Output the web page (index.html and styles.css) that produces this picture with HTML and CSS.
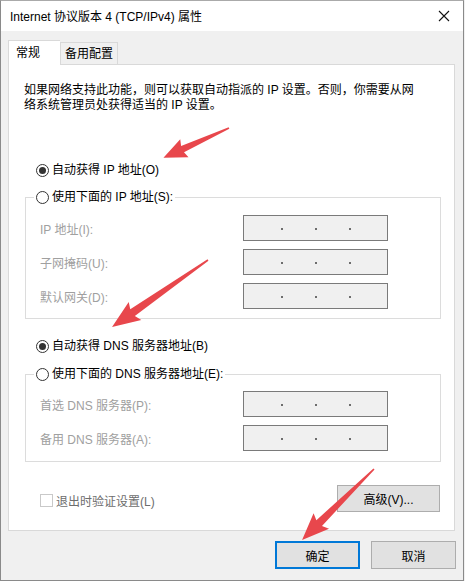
FILE: index.html
```html
<!DOCTYPE html>
<html lang="zh-CN">
<head>
<meta charset="utf-8">
<link rel="stylesheet" href="styles.css">
</head>
<body>
<div class="window">
  <div class="titlebar">
    <span class="title">Internet 协议版本 4 (TCP/IPv4) 属性</span>
    <svg class="close" width="12" height="12" viewBox="0 0 12 12"><path d="M1 1L11 11M11 1L1 11" stroke="#111" stroke-width="1.1" fill="none"/></svg>
  </div>
  <div class="content">
    <div class="tabs">
      <div class="tab active">常规</div>
      <div class="tab">备用配置</div>
    </div>
    <div class="panel">
      <p class="desc">如果网络支持此功能，则可以获取自动指派的 IP 设置。否则，你需要从网<br>络系统管理员处获得适当的 IP 设置。</p>
      <div class="radio-row first"><span class="radio checked"></span><span>自动获得 IP 地址(O)</span></div>
      <fieldset class="group g1">
        <legend><span class="radio-row"><span class="radio"></span><span>使用下面的 IP 地址(S):</span></span></legend>
        <div class="field"><span class="lbl">IP 地址(I):</span><span class="ip"><i></i><i></i><i></i></span></div>
        <div class="field"><span class="lbl">子网掩码(U):</span><span class="ip"><i></i><i></i><i></i></span></div>
        <div class="field"><span class="lbl">默认网关(D):</span><span class="ip"><i></i><i></i><i></i></span></div>
      </fieldset>
      <div class="radio-row dns"><span class="radio checked"></span><span>自动获得 DNS 服务器地址(B)</span></div>
      <fieldset class="group g2">
        <legend><span class="radio-row"><span class="radio"></span><span>使用下面的 DNS 服务器地址(E):</span></span></legend>
        <div class="field"><span class="lbl">首选 DNS 服务器(P):</span><span class="ip"><i></i><i></i><i></i></span></div>
        <div class="field"><span class="lbl">备用 DNS 服务器(A):</span><span class="ip"><i></i><i></i><i></i></span></div>
      </fieldset>
      <div class="bottom-row">
        <div class="check"><span class="box"></span><span>退出时验证设置(L)</span></div>
        <div class="btn adv">高级(V)...</div>
      </div>
    </div>
    <div class="actions">
      <div class="btn ok">确定</div>
      <div class="btn">取消</div>
    </div>
  </div>
  <svg class="arrows" width="465" height="581" viewBox="0 0 465 581">
    <g fill="#e8474c">
      <polygon transform="translate(229 128) rotate(155.6)" points="0,-0.8 51,-3.5 49,-10 72,0 49,10 51,3.5 0,0.8"/>
      <polygon transform="translate(208 260) rotate(145.1)" points="0,-0.8 92,-4 89,-11 117,0 89,11 92,4 0,0.8"/>
      <polygon transform="translate(374 469) rotate(135.4)" points="0,-0.8 77,-4 74,-11 101,0 74,11 77,4 0,0.8"/>
    </g>
  </svg>
</div>
</body>
</html>
```

FILE: styles.css
```css
* { box-sizing: border-box; }
html, body { margin: 0; padding: 0; }
body {
  width: 465px;
  height: 581px;
  overflow: hidden;
  background: #f0f0f0;
  font-family: "Liberation Sans", "Noto Sans CJK SC", sans-serif;
  font-size: 12px;
  color: #000;
}
.window {
  position: relative;
  width: 464px;
  height: 581px;
  border: 1px solid #8a8a8a;
  border-top-color: #aaaaaa;
  background: #f0f0f0;
}
.titlebar {
  height: 30px;
  background: #fff;
  display: flex;
  align-items: center;
  justify-content: space-between;
  padding: 0 10px 1px 9px;
}
.title { font-size: 12px; }
.close { margin-right: 3px; }
.content { padding: 9px 8px 0 7px; }
.tabs {
  display: flex;
  align-items: flex-end;
  height: 24px;
  position: relative;
  z-index: 1;
}
.tab {
  height: 22px;
  padding: 0 4px 0 4px;
  border: 1px solid #d9d9d9;
  border-bottom: none;
  background: #f0f0f0;
  display: flex;
  align-items: center;
  line-height: 1;
}
.tab.active {
  height: 25px;
  margin-bottom: -1px;
  width: 52px;
  padding-left: 7px;
  padding-bottom: 1px;
  background: #fff;
  border-right: none;
}
.tab:not(.active) { border-left: 1px solid #d9d9d9; }
.panel {
  background: #fff;
  border: 1px solid #d9d9d9;
  height: 467px;
  padding: 18px 0 0 0;
}
.desc {
  margin: 0 0 0 15px;
  line-height: 15px;
}
.radio-row {
  display: flex;
  align-items: center;
  height: 16px;
  gap: 3px;
  line-height: 16px;
}
.radio-row.first { margin: 49px 0 0 27px; }
.radio-row.dns { margin: 19px 0 0 27px; }
.radio {
  width: 13px;
  height: 13px;
  border: 1px solid #333;
  border-radius: 50%;
  background: #fff;
  display: flex;
  align-items: center;
  justify-content: center;
  flex: none;
}
.radio.checked::after {
  content: "";
  width: 7px;
  height: 7px;
  border-radius: 50%;
  background: #333;
}
.group {
  margin: 11px 13px 0 16px;
  border: 1px solid #dcdcdc;
  padding: 0;
  min-width: 0;
}
.group legend {
  margin-left: 8px;
  padding: 0 2px;
  height: 16px;
}
.g1 { padding: 10px 0 9px 0; }
.g2 { padding: 9px 0 10px 0; margin-top: 12px; }
.field {
  display: flex;
  align-items: center;
  height: 26px;
  padding-left: 14px;
}
.field + .field { margin-top: 8px; }
.lbl { width: 203px; color: #a0a0a0; flex: none; }
.ip {
  width: 145px;
  height: 26px;
  border: 1px solid #7a7a7a;
  background: #f0f0f0;
  display: flex;
  align-items: center;
  padding: 1px 0 0 37px;
  gap: 32px;
}
.ip i {
  width: 2px;
  height: 2px;
  background: #6d6d6d;
  flex: none;
}
.bottom-row {
  display: flex;
  justify-content: space-between;
  align-items: center;
  margin: 23px 14px 0 31px;
}
.check {
  display: flex;
  align-items: center;
  gap: 3px;
  color: #6d6d6d;
  margin-top: 3px;
}
.box {
  width: 13px;
  height: 13px;
  border: 1px solid #c9c9c9;
  background: #fff;
}
.btn {
  height: 28px;
  border: 1px solid #adadad;
  background: #e1e1e1;
  display: flex;
  align-items: center;
  justify-content: center;
  width: 85px;
}
.btn.adv { width: 103px; height: 27px; }
.actions {
  display: flex;
  justify-content: flex-end;
  gap: 11px;
  margin-top: 10px;
  margin-right: -1px;
}
.btn.ok { border: 2px solid #0078d7; }
.arrows {
  position: absolute;
  left: -1px;
  top: -1px;
  pointer-events: none;
}
```
